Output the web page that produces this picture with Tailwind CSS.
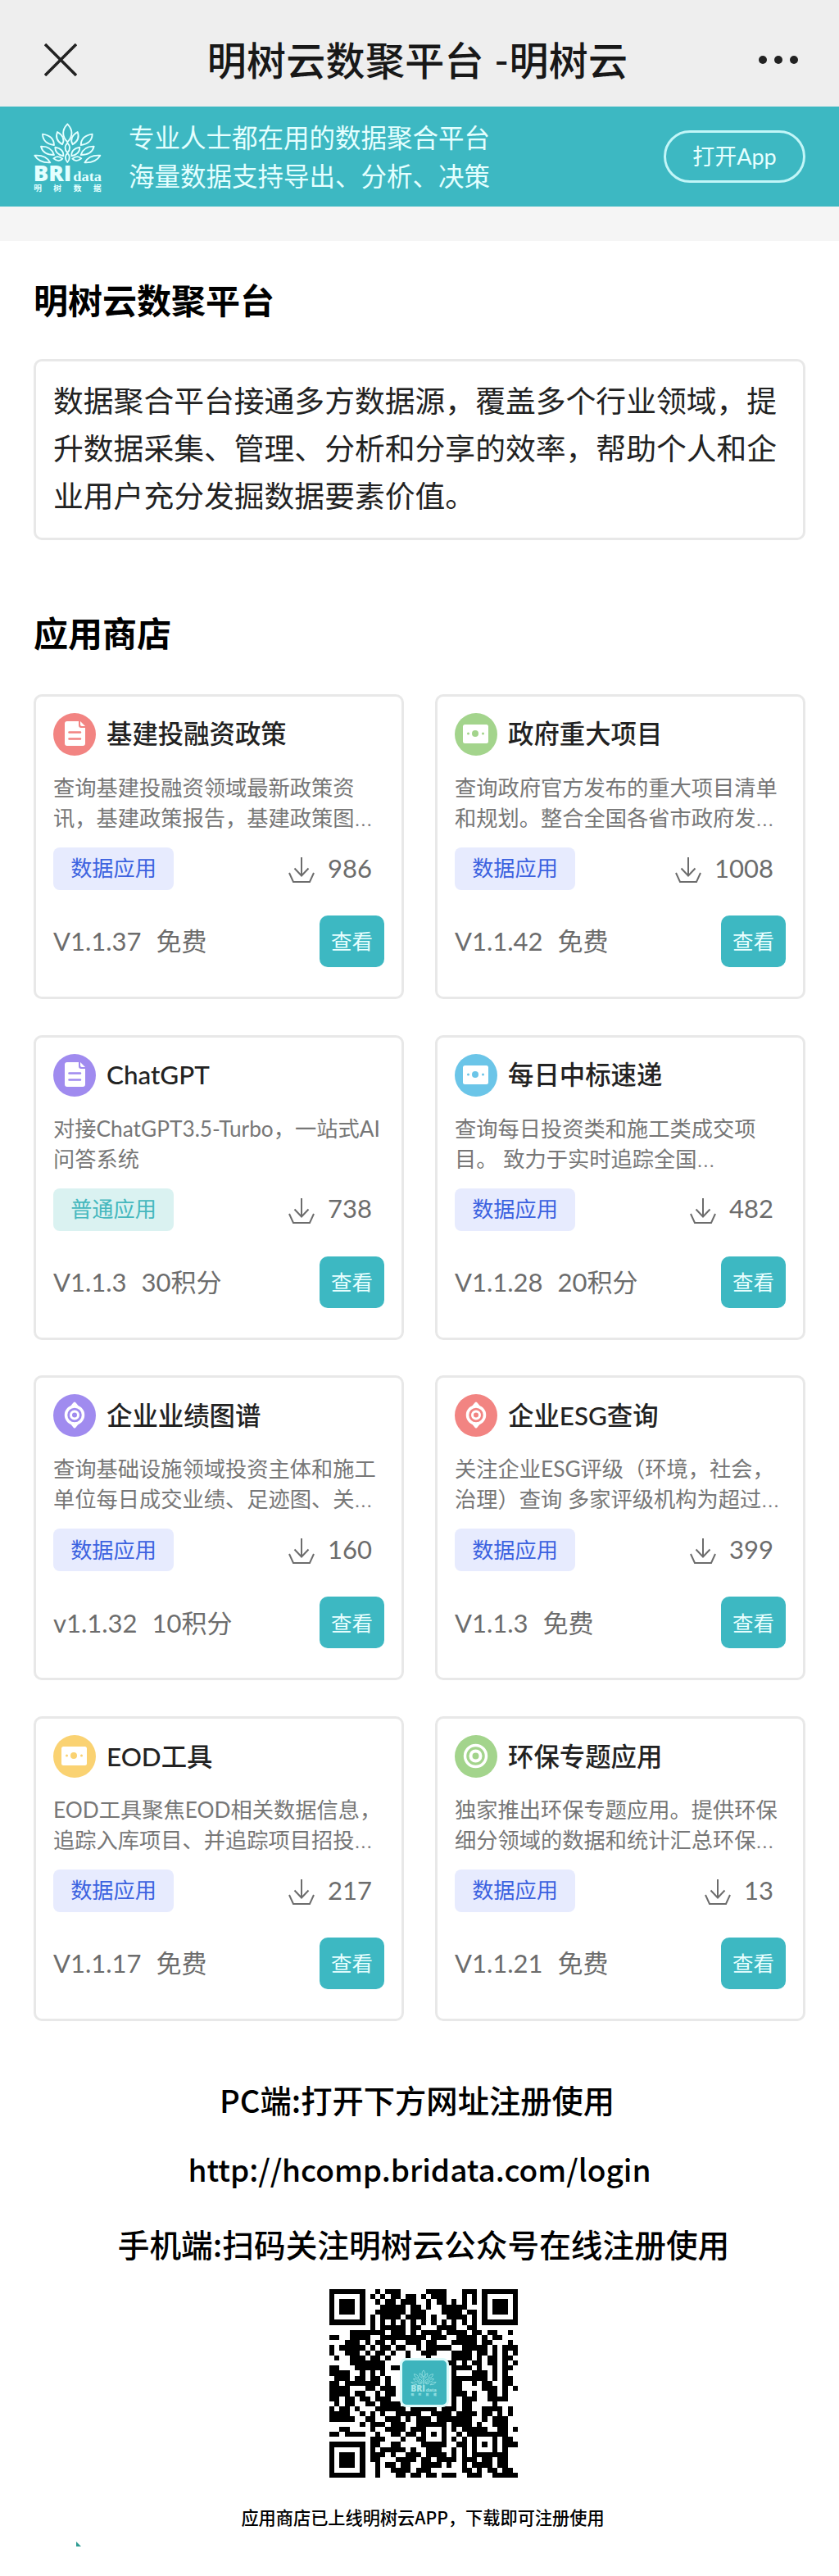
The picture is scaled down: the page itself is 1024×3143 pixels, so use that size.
<!DOCTYPE html>
<html lang="zh-CN">
<head>
  <meta charset="UTF-8">
  <meta name="viewport" content="width=device-width, initial-scale=1.0">
  <title>明树云数聚平台 -明树云</title>
  <script src="https://cdn.jsdelivr.net/npm/@tailwindcss/browser@4"></script>
</head>
<body class="bg-white text-[#222] font-['Lato','Noto_Sans_CJK_SC',sans-serif]">

  <!-- 图标 -->
  <svg class="hidden">
    <symbol id="logo" viewBox="0 0 330 300">
      <g fill="none" stroke="currentColor" stroke-width="5.5" stroke-linejoin="round">
        <path d="M157 31Q188 64 157 97Q126 64 157 31Z"/>
        <path d="M157 100Q174 118 157 136Q140 118 157 100ZM157 137Q172 154 157 171Q142 154 157 137Z"/>
        <g id="half">
          <path d="M120 60Q109 88 138 106Q153 80 120 60Z"/>
          <path d="M66 68Q67 102 108 108Q107 74 66 68Z"/>
          <path d="M112 116Q111 140 142 148Q144 122 112 116Z"/>
          <path d="M60 113Q68 144 108 144Q98 112 60 113Z"/>
          <path d="M106 157Q120 143 139 158Q126 173 106 157Z"/>
          <path d="M37 146Q54 174 94 172Q78 143 37 146Z"/>
        </g>
        <use href="#half" transform="matrix(-1 0 0 1 314 0)"/>
      </g>
      <g fill="currentColor">
        <text x="32" y="240" font-family="Open Sans" font-weight="800" font-size="80" textLength="140" lengthAdjust="spacingAndGlyphs">BRI</text>
        <text x="178" y="240" font-family="Liberation Serif" font-weight="700" font-size="50" textLength="104" lengthAdjust="spacingAndGlyphs">data</text>
        <text y="276" x="34 106 179 252" font-family="Noto Sans CJK SC" font-weight="700" font-size="29">明树数据</text>
      </g>
    </symbol>
    <symbol id="doc" viewBox="0 0 52 52">
      <path fill="#fff" d="M17 10h14v5q0 3 3 3h5v19q0 3-3 3H17q-3 0-3-3V13q0-3 3-3Z"/>
      <path fill="#fff" d="M33 10l6 6h-4q-2 0-2-2Z"/>
      <path stroke="currentColor" stroke-width="2.6" stroke-linecap="round" d="M19.500 23.500h13.500M19.500 31.500h13.500"/>
    </symbol>
    <symbol id="cash" viewBox="0 0 52 52">
      <rect x="10" y="14" width="31" height="23" rx="2.500" fill="#fff"/>
      <circle cx="25" cy="25" r="4" fill="currentColor"/>
      <circle cx="16.500" cy="25" r="1.500" fill="currentColor"/>
      <circle cx="34.500" cy="25" r="1.500" fill="currentColor"/>
    </symbol>
    <symbol id="pin" viewBox="0 0 52 52">
      <circle cx="26" cy="25.500" r="10.500" fill="none" stroke="#fff" stroke-width="3.500"/>
      <circle cx="26" cy="25.500" r="4.500" fill="none" stroke="#fff" stroke-width="3"/>
      <path fill="#fff" d="M20 16l4-5q2-3 4 0l4 5ZM20 35l4 5q2 3 4 0l4-5Z"/>
    </symbol>
    <symbol id="ring" viewBox="0 0 52 52">
      <circle cx="25.500" cy="25.500" r="13" fill="none" stroke="#fff" stroke-width="3.500"/>
      <circle cx="25.500" cy="25.500" r="6" fill="none" stroke="#fff" stroke-width="4"/>
    </symbol>
    <symbol id="download" viewBox="0 0 32 32">
      <path fill="none" stroke="currentColor" stroke-width="2" d="M16 0v23M7.500 13.500L16 22.500L24.500 13.500M1 19L6 30H26L31 19"/>
    </symbol>
  </svg>

  <!-- 顶部导航 -->
  <header class="flex h-[130px] items-center justify-between bg-[#eee] pt-[15px] pr-[49px] pl-[54px]">
    <svg class="size-10" viewBox="0 0 40 40" fill="none" stroke="#222" stroke-width="3.500"><path d="M1 1L39 39M39 1L1 39"/></svg>
    <h1 class="pt-0.5 text-5xl font-medium tracking-[0.3px] text-[#181818]">明树云数聚平台 -明树云</h1>
    <svg class="h-3 w-[50px]" viewBox="0 0 50 12" fill="#222"><circle cx="6" cy="6" r="5"/><circle cx="25" cy="6" r="5"/><circle cx="44" cy="6" r="5"/></svg>
  </header>

  <!-- App 横幅 -->
  <section class="flex h-[122px] items-center bg-[#3db8c2] pr-[41px] pl-[30px] text-[#e4ffff]">
    <svg class="h-[100px] w-[110px] shrink-0"><use href="#logo"/></svg>
    <p class="ml-[17px] pt-px text-[31.500px] leading-[47px]">专业人士都在用的数据聚合平台<br>海量数据支持导出、分析、决策</p>
    <button class="ml-auto h-[64px] w-[173px] rounded-full border-3 border-[#c2f6f8] text-[27px]">打开App</button>
  </section>
  <div class="h-[42px] bg-[#f5f5f5]"></div>

  <main class="pr-[41px] pl-[41px]">
    <h2 class="mt-[43px] text-[42px] leading-[60px] font-bold text-black">明树云数聚平台</h2>
    <p class="mt-[41px] h-[221px] rounded-[10px] border-3 border-[#e8e8e8] px-[21px] pt-[19px] text-[36.800px] leading-[58px] whitespace-nowrap">数据聚合平台接通多方数据源，覆盖多个行业领域，提<br>升数据采集、管理、分析和分享的效率，帮助个人和企<br>业用户充分发掘数据要素价值。</p>
    <h2 class="mt-[84px] text-[42px] leading-[60px] font-bold text-black">应用商店</h2>
    <div id="apps" class="mt-[44px] grid grid-cols-2 gap-x-[38px] gap-y-[43.700px]"></div>
  </main>

  <!-- 注册说明 -->
  <footer class="relative flex h-[671px] flex-col items-center font-['Noto_Sans_CJK_SC',sans-serif] font-medium text-black">
    <p class="mt-[66px] -ml-1.5 text-[38.300px] leading-[60px]">PC端:打开下方网址注册使用</p>
    <p class="mt-6 text-[37px] leading-[60px]">http://hcomp.bridata.com/login</p>
    <p class="mt-[31px] ml-2.5 text-[38.700px] leading-[60px]">手机端:扫码关注明树云公众号在线注册使用</p>
    <div class="relative mt-[26px] ml-2.5 size-[230px]">
      <svg id="qr" class="size-full" viewBox="0 0 37 37" shape-rendering="crispEdges"></svg>
      <div class="absolute top-[84px] left-[86px] flex size-[60px] items-center justify-center rounded-lg border-3 border-[#dcfbfb] bg-[#3db4bd] text-[#a5e6e8]">
        <svg class="h-[38px] w-[42px]"><use href="#logo"/></svg>
      </div>
    </div>
    <p class="mt-[33px] ml-2 text-[21.200px] leading-[30px]">应用商店已上线明树云APP，下载即可注册使用</p>
    <i class="absolute bottom-[30px] left-[93px] h-1.5 w-1.5 bg-[#2f9c93] [clip-path:polygon(0_0,100%_100%,0_100%)]"></i>
  </footer>

  <script>
    // 名称, 图标, 颜色, 简介第一行, 简介第二行, 下载量, 版本, 价格
    const apps = [
      ['基建投融资政策', 'doc', '#f28482', '查询基建投融资领域最新政策资', '讯，基建政策报告，基建政策图…', '986', 'V1.1.37', '免费'],
      ['政府重大项目', 'cash', '#a3d48c', '查询政府官方发布的重大项目清单', '和规划。整合全国各省市政府发…', '1008', 'V1.1.42', '免费'],
      ['ChatGPT', 'doc', '#a08bef', '对接ChatGPT3.5-Turbo，一站式AI', '问答系统', '738', 'V1.1.3', '30积分'],
      ['每日中标速递', 'cash', '#6bc5e8', '查询每日投资类和施工类成交项', '目。 致力于实时追踪全国…', '482', 'V1.1.28', '20积分'],
      ['企业业绩图谱', 'pin', '#a08bef', '查询基础设施领域投资主体和施工', '单位每日成交业绩、足迹图、关…', '160', 'v1.1.32', '10积分'],
      ['企业ESG查询', 'pin', '#f28482', '关注企业ESG评级（环境，社会，', '治理）查询 多家评级机构为超过…', '399', 'V1.1.3', '免费'],
      ['EOD工具', 'cash', '#fad272', 'EOD工具聚焦EOD相关数据信息，', '追踪入库项目、并追踪项目招投…', '217', 'V1.1.17', '免费'],
      ['环保专题应用', 'ring', '#a3d48c', '独家推出环保专题应用。提供环保', '细分领域的数据和统计汇总环保…', '13', 'V1.1.21', '免费'],
    ];
    const tags = {
      data: '<span class="flex h-[52px] w-[147px] items-center justify-center rounded-lg bg-[#e7ebfe] text-[26.200px] text-[#3c62e0]">数据应用</span>',
      common: '<span class="flex h-[52px] w-[147px] items-center justify-center rounded-lg bg-[#daf2f1] text-[26.200px] text-[#45b8be]">普通应用</span>',
    };
    const ellipsis = '<span class="font-[\'Open_Sans\'] text-[30px] leading-none font-light">…</span>';
    document.getElementById('apps').innerHTML = apps.map(([name, icon, color, line1, line2, count, version, price]) => `
      <article class="h-[372px] rounded-[10px] border-3 border-[#e8e8e8] px-[21px] pt-5">
        <div class="flex h-[52px] items-center">
          <svg class="size-[52px] rounded-full" style="background:${color};color:${color}"><use href="#${icon}"/></svg>
          <h3 class="ml-[13px] text-[31.400px] font-medium">${name}</h3>
        </div>
        <p class="mt-[21px] h-[74px] text-[26.250px] leading-[37px] whitespace-nowrap text-[#777]">${line1}<br>${line2.replace('…', ellipsis)}</p>
        <div class="mt-[17px] flex items-center justify-between pr-[15px] text-[#6c6c6c]">
          ${name === 'ChatGPT' ? tags.common : tags.data}
          <span class="flex items-center gap-[16px] text-[31px] leading-none"><svg class="mt-1 size-8"><use href="#download"/></svg><span class="-mt-0.5">${count}</span></span>
        </div>
        <div class="mt-[31px] flex h-[63px] items-center justify-between text-[31px] text-[#6c6c6c]">
          <span class="flex gap-[18px]"><span>${version}</span><span>${price}</span></span>
          <button class="h-[63px] w-[79px] rounded-[10px] bg-[#3db8c2] text-[25.500px] text-[#e8ffff]">查看</button>
        </div>
      </article>`).join('');

    // 公众号二维码
    const rows = `
#######..#.###.....####...###.#######
#.....#.#.#.##.##.#.###...#.#.#.....#
#.###.#..#.##.###..#.##.#.#.#.#.###.#
#.###.#...#####.##.#..#####...#.###.#
#.###.#..######.###...####.##.#.###.#
#.....#.#.####.####.#..####.#.#.....#
#######.#.#.#.#.#.#.#.#.#.#.#.#######
........#.#####.##...####..##........
....#######.###.#.####.####.##.##..#.
##..####..#########.###..####.#.##...
...###.#.##.#..###.##...#####.##...#.
#.#####.#.##.##..#.#####..#####.#.###
#..###.#.##.#..#..###...####.##.#.#.#
.#..###.##.#...#...#....####.#.##.##.
....#######............##.#.##.##.#.#
##...######.##..........####.#..#.##.
####..#.#.#.............#...###.#.#..
.###.##.##.#............#######.#.##.
##.#######.#............##..#.##..##.
####...##.###...........##....###.#.#
####.##..#.##...........###.#..##.#..
##.##.##.###............#.###..####..
.#.##..##.####..........#.##....#....
#.##.#...######.#####.###.##..####.#.
####..#.#.#..#####..####.####.##.#.#.
#####..##..###.#.###.#######..#.###..
......#.###.###..######.####.#..###..
..##....#..####.###...#.#.#####..##.#
##.####..#..##.##.#.#.#..#.########..
........###...#..##...#.#.#.#...#.##.
#######.##..##....#####..##.#.#.#.###
#.....#.#.#####.#..###..#.#.#...#.#..
#.###.#.###.#..###.####.#.#.#######..
#.###.#.##...####.##.####.###.##.##..
#.###.#..#.##.##..####.#..#.####.##..
#.....#..#..####.###......##.#.##.##.
#######..#...##.##.##.###..###..#####`.trim().split('\n');
    let d = '';
    rows.forEach((row, y) => [...row].forEach((c, x) => { if (c === '#') d += `M${x} ${y}h1v1h-1z`; }));
    document.getElementById('qr').innerHTML = `<path d="${d}"/>`;
  </script>
</body>
</html>
